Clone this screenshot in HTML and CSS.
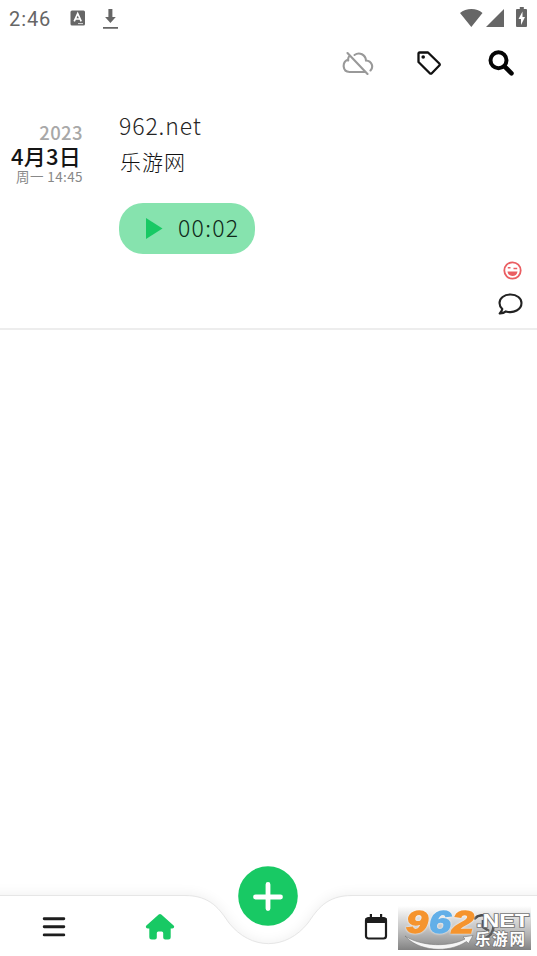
FILE: index.html
```html
<!DOCTYPE html>
<html lang="zh-CN">
<head>
<meta charset="utf-8">
<title>日记</title>
<link rel="stylesheet" href="styles.css">
</head>
<body>
<div class="app">
  <header class="status">
    <span class="clock">2:46</span>
    <svg class="status-a" width="16" height="16" viewBox="0 0 16 16"><rect x=".5" y=".5" width="14.5" height="15" rx="1.5" fill="#666"/><path d="M4.200 11.300 7.700 3.500l3.500 7.800M5.400 9h4.600" fill="none" stroke="#fff" stroke-width="1.700"/><path d="M8 13.600h5" stroke="#ddd"/></svg>
    <svg class="status-dl" width="17" height="20" viewBox="0 0 17 20"><path d="M6.400 0h4v8h3.400l-5.400 6-5.300-6h3.300zM1 18h15v1.700H1z" fill="#666"/></svg>
    <svg class="status-right" width="68" height="22" viewBox="0 0 68 22" fill="#666"><path d="M0 6C6 .8 17 .8 22.500 6L11.300 20zM44 2v18H26z"/><path d="M57.800 2h2V0h4v2h2.200q1 0 1 1v16q0 1-1 1h-9q-1 0-1-1V3q0-1 1-1z"/><path d="m62.500 4.500-4 7.500h2.500v6l4-8h-2.500z" fill="#fff"/></svg>
  </header>
  <div class="toolbar">
    <svg width="32" height="26" viewBox="0 0 32 26" fill="none" stroke="#999" stroke-width="2.100" stroke-linecap="round"><path d="M6.200 9.500C-.5 12 .5 22 7.500 22H23M12.500 5c5-3.500 11-.2 11.500 5.500 6 .5 7.800 6.500 4.500 10M7 6.500c-.9 1.300-1 2.700-.8 4M5.500 3l20 21"/></svg>
    <svg width="26" height="26" viewBox="0 0 26 26" fill="none" stroke="#111" stroke-width="2.300" stroke-linejoin="round"><path d="M2.500 3.500q0-1 1-1h8.500l11.300 11q1 1 0 2l-7.500 7.700q-1 1-2 0L2.500 12z"/><circle cx="7.200" cy="7" r="1.800" fill="#111" stroke="none"/></svg>
    <svg width="28" height="28" viewBox="0 0 28 28" fill="none" stroke="#050505"><circle cx="11.500" cy="11.300" r="8" stroke-width="4"/><path d="m17.500 17.300 7 7" stroke-width="4.500" stroke-linecap="round"/></svg>
  </div>
  <main class="entry">
    <div class="date">
      <div class="year">2023</div>
      <div class="day">4月3日</div>
      <div class="time">周一 14:45</div>
    </div>
    <div class="content">
      <p class="site">962.net</p>
      <p class="name">乐游网</p>
      <div class="audio">
        <svg width="17" height="21" viewBox="0 0 17 21"><path d="M0 0 16.500 10.500 0 21z" fill="#18c964"/></svg>
        <span>00:02</span>
      </div>
    </div>
    <div class="meta">
      <svg class="mood" width="19" height="19" viewBox="0 0 19 19" fill="none" stroke="#ea5e62" stroke-width="1.800"><circle cx="9.500" cy="9.500" r="8.200"/><path d="M4.500 10.500h10c-.5 6-9.500 6-10 0z" fill="#ea5e62" stroke="none"/><path d="M4.800 6.700h2.700M10.500 7.500h3.700" stroke-width="1.600"/></svg>
      <svg class="comment" width="26" height="24" viewBox="0 0 26 24" fill="none" stroke="#222" stroke-width="2.100" stroke-linejoin="round"><path d="M13.500 2.500C7 2.500 2.500 6.300 2.500 11c0 2.500 1.200 4.500 2.800 6-.3 1.800-1.200 3-2.600 4.400 2.500.1 4.700-.7 6.200-2 8 2.500 15.600-2 15.600-8.400 0-4.700-4.600-8.500-11-8.500z"/></svg>
    </div>
  </main>
  <nav class="nav">
    <svg class="nav-shape" width="537" height="106" viewBox="0 0 537 106">
      <defs><filter id="shade" x="-5%" y="-40%" width="110%" height="180%"><feGaussianBlur stdDeviation="7"/></filter></defs>
      <path d="M-20 45H185C211 45 220 60 229 73 251 101 286 101 308 73 317 60 326 45 352 45H557V140H-20z" fill="#000" opacity=".07" filter="url(#shade)"/>
      <path d="M-2 45.500H185C211 45.500 220 60 229 73 251 100.500 286 100.500 308 73 317 60 326 45.500 352 45.500H539V110H-2z" fill="#fff" stroke="#e6e6e6"/>
    </svg>
    <div class="tabs">
      <svg width="24" height="22" viewBox="0 0 24 22"><path d="M2.200 2.700h19.600M2.200 10.800h19.600M2.200 18.900h19.600" stroke="#1d1d1d" stroke-width="2.900" stroke-linecap="round"/></svg>
      <svg class="home" width="30" height="28" viewBox="0 0 30 28"><path d="M13.700 1.500q1.300-1 2.600 0l12.300 11q1 1 .4 2t-2 1h-1.300V24q0 2.500-2.500 2.500h-3q-2 0-2-2V20q0-1.500-1.500-1.500h-3.400q-1.500 0-1.500 1.500v4.500q0 2-2 2h-3Q4.300 26.500 4.300 24v-8.500H3q-1.500 0-2-1t.4-2z" fill="#18c964"/></svg>
      <div class="add"><svg width="60" height="60" viewBox="0 0 60 60"><circle cx="30" cy="30" r="29.800" fill="#18c964"/><path d="M30 18.500v24M17.500 31h25" stroke="#fff" stroke-width="4.800" stroke-linecap="round"/></svg></div>
      <svg width="24" height="28" viewBox="0 0 24 28"><rect x="2" y="5" width="20" height="20.500" rx="2.500" fill="#fff" stroke="#1d1d1d" stroke-width="2.200"/><path d="M1.500 5h21v5h-21zM5.800 1h2.200v5H5.800zM16 1h2.200v5H16z" fill="#1d1d1d"/></svg>
      <svg width="26" height="28" viewBox="0 0 26 28" fill="none" stroke="#444" stroke-width="2.600"><path d="M4 6c9-9 22 0 19 11-2 6-7 9-13 8M13 7v7l6 4"/></svg>
    </div>
    <svg class="watermark" width="133" height="44" viewBox="0 0 133 44">
      <defs>
        <linearGradient id="grey" x2="0" y2="1"><stop stop-color="#666" stop-opacity="0"/><stop offset=".5" stop-color="#777" stop-opacity=".42"/><stop offset="1" stop-color="#666" stop-opacity=".82"/></linearGradient>
      </defs>
      <rect width="133" height="44" fill="url(#grey)"/>
      <path d="M7 30C24 41 52 41 67 33l-2-2 10-1.500-4.500 8-2-2C50 48 20 45 7 30z" fill="#f5f5f5" stroke="#777" stroke-width=".6"/>
      <g class="wm-number"><text x="8" y="26.500" textLength="22" lengthAdjust="spacingAndGlyphs" fill="#f5942e" stroke="#f5942e">9</text><text x="31" y="26.500" textLength="22" lengthAdjust="spacingAndGlyphs" fill="#62afe8" stroke="#62afe8">6</text><text x="54" y="26.500" textLength="22" lengthAdjust="spacingAndGlyphs" fill="#f5942e" stroke="#f5942e">2</text></g>
      <text class="wm-net" x="78" y="20.500" textLength="53" lengthAdjust="spacingAndGlyphs">.NET</text>
      <text class="wm-cn" x="77" y="39" textLength="50" lengthAdjust="spacing">乐游网</text>
    </svg>
  </nav>
</div>
</body>
</html>
```
FILE: styles.css
```css
* { box-sizing: border-box; }
body { margin: 0; background: #fff; overflow: hidden; }
svg { display: block; flex: none; }
.app { width: 537px; height: 956px; display: flex; flex-direction: column; font-family: Lato, "Noto Sans CJK SC", sans-serif; }
.status { height: 36px; display: flex; align-items: flex-start; padding: 7px 9px 0; }
.clock { width: 61px; font: 20px/24px Roboto, sans-serif; letter-spacing: .9px; color: #666; }
.status-a { margin-top: 3px; }
.status-dl { margin: 2px 0 0 16px; }
.status-right { margin-left: auto; }
.toolbar { height: 53px; display: flex; align-items: center; justify-content: flex-end; gap: 45px; padding: 1px 22px 0 0; }
.toolbar svg:first-child { margin-right: -3px; }
.entry { height: 241px; display: flex; border-bottom: 2px solid #ededed; }
.date { width: 83px; padding-top: 33px; text-align: right; color: #999; white-space: nowrap; }
.year { font: 500 18.500px/20px "Noto Sans CJK SC", sans-serif; letter-spacing: .4px; color: #a8a8a8; }
.day { font: 500 22px/26px "Noto Sans CJK SC", sans-serif; letter-spacing: .2px; color: #151515; padding-right: 2px; }
.time { font: 400 13.500px/17px "Noto Sans CJK SC", sans-serif; letter-spacing: .4px; color: #888; }
.content { margin-left: 36px; padding-top: 18px; color: #252525; }
.content p { margin: 0; height: 36px; line-height: 35px; }
.content .site { font: 300 23px/36px "Noto Sans CJK SC", sans-serif; letter-spacing: .9px; }
.content .name { font: 300 21px/36px "Noto Sans CJK SC", sans-serif; letter-spacing: 1px; padding-left: 1px; color: #111; }
.audio { width: 136px; height: 51px; margin-top: 24px; border-radius: 24px; display: flex; align-items: center; padding-left: 27px; background: #86e3ae; font: 300 23px "Noto Sans CJK SC", sans-serif; letter-spacing: 1.3px; color: #102a1b; }
.audio span { margin: -3px 0 0 15px; }
.meta { margin-left: auto; padding: 172px 14px 0 0; display: flex; flex-direction: column; align-items: flex-end; gap: 12px; }
.mood { margin-right: 1px; }
.nav { position: relative; margin-top: auto; height: 106px; }
.nav-shape { position: absolute; left: 0; top: 0; }
.tabs { position: relative; height: 60px; margin-top: 45px; display: grid; grid-template-columns: repeat(5, 1fr); justify-items: center; align-items: center; padding-top: 2px; }
.home { margin-right: 2px; }
.add { height: 60px; transform: translateY(-31px); }
.watermark { position: absolute; left: 398px; top: 56px; overflow: visible; }
.wm-number { font: italic 900 31px "Liberation Sans", sans-serif; stroke-width: 1.4px; filter: drop-shadow(0 0 1px #fff); }
.wm-net { font: bold 19px "Liberation Sans", sans-serif; fill: #fff; stroke: #777; stroke-width: 1.6px; paint-order: stroke; }
.wm-cn { font: bold 15.500px "Noto Sans CJK SC", sans-serif; fill: #fff; stroke: #777; stroke-width: 1.5px; paint-order: stroke; }
```
